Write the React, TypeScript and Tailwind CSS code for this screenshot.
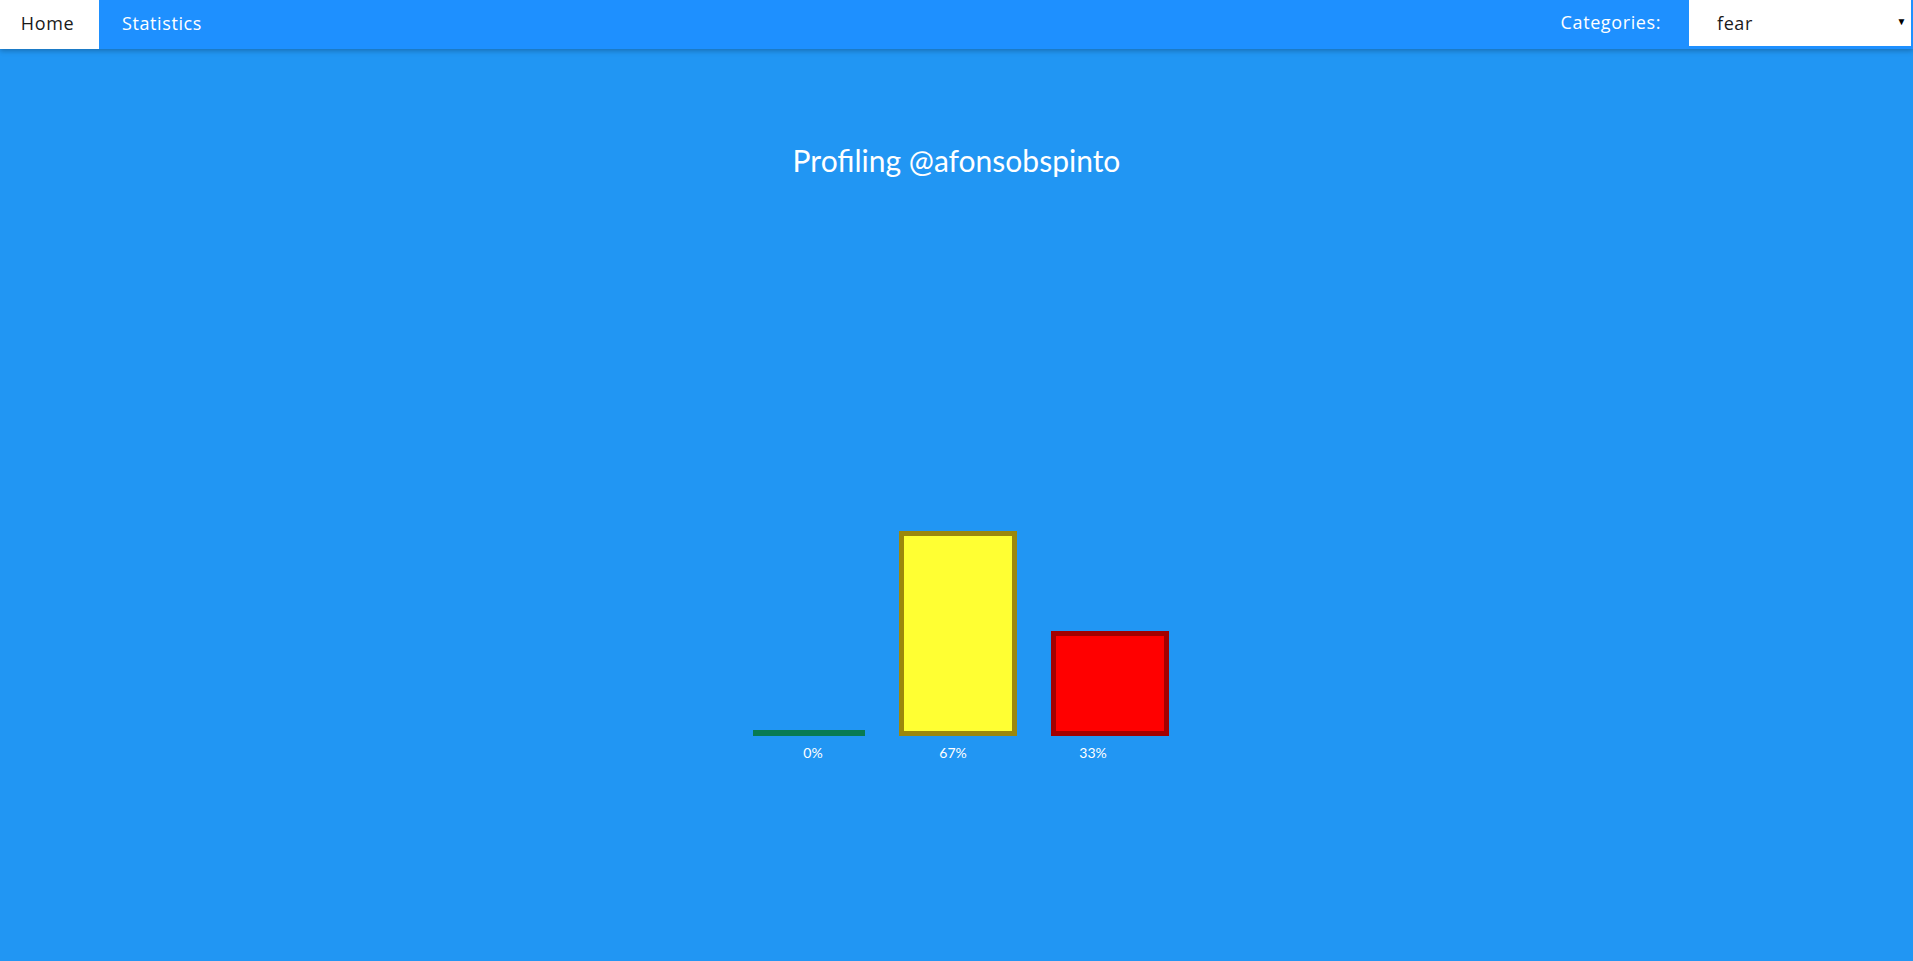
import * as React from "react"

const bars = [
  { label: "0%", height: 6, fill: "bg-[#0b7f55]", border: "border-[#087a52]", width: "w-[112px]" },
  { label: "67%", height: 205, fill: "bg-[#ffff33]", border: "border-[#9c870c]", width: "w-[118px]" },
  { label: "33%", height: 105, fill: "bg-[#ff0000]", border: "border-[#a30000]", width: "w-[118px]" },
]

export default function App() {
  const [category, setCategory] = React.useState("fear")

  return (
    <div className="min-h-screen w-full bg-[#2196f3] font-['Lato','Open_Sans',sans-serif]">
      {/* top nav */}
      <nav className="flex h-[49px] items-start justify-between bg-[#1e90ff] pr-[2px] shadow-[0_2px_5px_rgba(0,0,0,0.25)] font-['Open_Sans',sans-serif] text-[18px] tracking-[0.6px]">
        <div className="flex h-full">
          <a className="flex h-full w-[99px] items-center justify-center bg-white pb-[3px] pr-[4px] text-[#1a1a1a]">Home</a>
          <a className="flex h-full items-center px-[23px] pb-[3px] text-white">Statistics</a>
        </div>
        <div className="flex h-[46px] items-center">
          <span className="mr-[28px] pb-[1px] text-white">Categories:</span>
          <div className="relative flex h-full w-[222px] items-center bg-white pl-[28px] text-[#1a1a1a]">
            <select
              value={category}
              onChange={(e) => setCategory(e.target.value)}
              className="h-full w-full appearance-none bg-transparent tracking-[0.6px] outline-none"
            >
              <option value="fear">fear</option>
              <option value="joy">joy</option>
              <option value="anger">anger</option>
            </select>
            <span className="pointer-events-none absolute right-[4px] top-[14px] text-[10px] text-black">▼</span>
          </div>
        </div>
      </nav>

      {/* title */}
      <h1 className="mt-[93px] text-center text-[30px] leading-[36px] text-white">Profiling @afonsobspinto</h1>

      {/* chart */}
      <div className="mt-[252px] flex flex-col items-center">
        <div className="ml-[8px] flex h-[306px] items-end gap-[34px]">
          {bars.map((b) => (
            <div
              key={b.label}
              className={`${b.width} ${b.fill} ${b.border} border-[5px] ${b.height < 10 ? "border-y-[3px]" : ""}`}
              style={{ height: b.height }}
            />
          ))}
        </div>
        <div className="mt-[7px] mr-[7px] flex">
          {bars.map((b) => (
            <div key={b.label} className="w-[140px] text-center text-[14px] leading-[20px] text-white">
              {b.label}
            </div>
          ))}
        </div>
      </div>
    </div>
  )
}
